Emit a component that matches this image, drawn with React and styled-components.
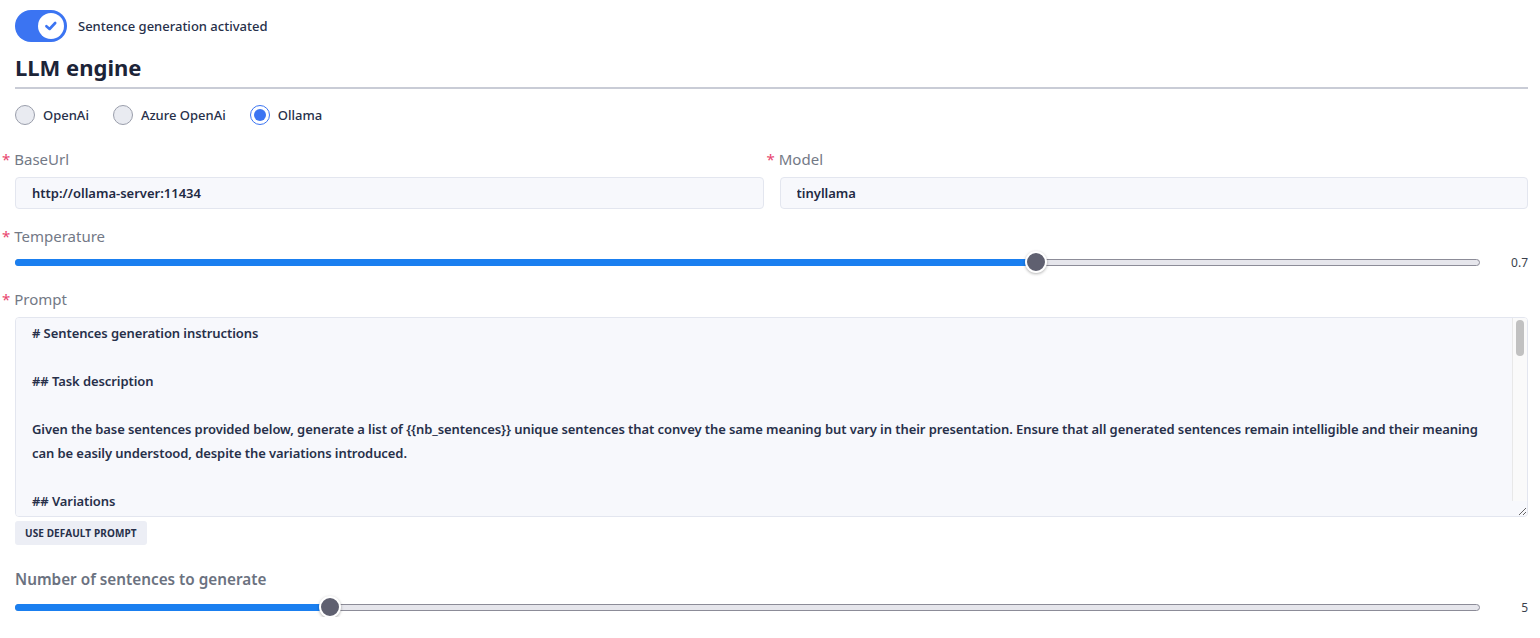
import { useState } from 'react';
import styled, { createGlobalStyle } from 'styled-components';

const GlobalStyle = createGlobalStyle`
  body {
    margin: 0;
    background: #ffffff;
    font-family: 'Noto Sans', 'Open Sans', sans-serif;
    color: #1f2a44;
  }
`;

const PROMPT = `# Sentences generation instructions

## Task description

Given the base sentences provided below, generate a list of {{nb_sentences}} unique sentences that convey the same meaning but vary in their presentation. Ensure that all generated sentences remain intelligible and their meaning can be easily understood, despite the variations introduced.

## Variations

Introduce variations in the sentences by changing the word order, using synonyms, adding or removing punctuation, and altering the sentence structure where appropriate.
{{#languages}}
The sentences should be written in {{languages}}.
{{/languages}}
{{#spelling_mistakes}}
Introduce some spelling mistakes in the generated sentences.
{{/spelling_mistakes}}
{{#sms_language}}
Use SMS language (abbreviations, phonetic spellings) in some of the sentences.
{{/sms_language}}
{{#abbreviated_language}}
Use abbreviated language in some of the sentences.
{{/abbreviated_language}}

## Base sentences

{{#sentences}}
- {{.}}
{{/sentences}}

## Expected output

Return the generated sentences as a JSON array of strings, without any other text.

## Constraints

- Do not repeat any of the base sentences.
- Do not number the sentences.
- Keep each sentence short and natural.
- Keep the original intent of the sentence.
- Avoid introducing new information.
`;

export default function App() {
  const [engine, setEngine] = useState('ollama');
  const [active, setActive] = useState(true);

  return (
    <>
      <GlobalStyle />
      <Page>
        <SwitchRow>
          <SwitchTrack $on={active} onClick={() => setActive(!active)}>
            <SwitchKnob>
              <svg width="16" height="16" viewBox="0 0 16 16">
                <path
                  d="M3.4 8.2 L6.6 11 L12.2 5"
                  fill="none"
                  stroke="#3b74f2"
                  strokeWidth="2.6"
                  strokeLinecap="round"
                  strokeLinejoin="round"
                />
              </svg>
            </SwitchKnob>
          </SwitchTrack>
          <SwitchLabel>Sentence generation activated</SwitchLabel>
        </SwitchRow>

        <Heading>LLM engine</Heading>

        <RadioRow>
          {[
            ['openai', 'OpenAi'],
            ['azure', 'Azure OpenAi'],
            ['ollama', 'Ollama'],
          ].map(([key, label]) => (
            <RadioOption key={key} onClick={() => setEngine(key)}>
              <RadioCircle $checked={engine === key} />
              {label}
            </RadioOption>
          ))}
        </RadioRow>

        <FieldGrid>
          <Field>
            <Label>
              <Required>*</Required>BaseUrl
            </Label>
            <Input defaultValue="http://ollama-server:11434" />
          </Field>
          <Field>
            <Label>
              <Required>*</Required>Model
            </Label>
            <Input defaultValue="tinyllama" />
          </Field>
        </FieldGrid>

        <Label $top={17}>
          <Required>*</Required>Temperature
        </Label>
        <Slider value={0.7} min={0} max={1} top={6} />

        <Label $top={17}>
          <Required>*</Required>Prompt
        </Label>
        <PromptBox>
          <PromptArea defaultValue={PROMPT} spellCheck={false} />
          {/* the headless browser hides native scrollbars, so draw the rail */}
          <ScrollRail>
            <ScrollThumb />
          </ScrollRail>
        </PromptBox>
        <SmallButton>Use default prompt</SmallButton>

        <SectionLabel>Number of sentences to generate</SectionLabel>
        <Slider value={5} min={1} max={20} top={8} />
      </Page>
    </>
  );
}

// thumb stays inside the track: its centre runs from 10px to (width - 10px)
function Slider({ value, min, max, top }) {
  const ratio = (value - min) / (max - min);
  const pos = `calc((100% - 20px) * ${ratio} + 10px)`;
  return (
    <SliderRow $top={top}>
      <SliderTrack>
        <SliderFill style={{ width: pos }} />
        <SliderThumb style={{ left: pos }} />
      </SliderTrack>
      <SliderValue>{value}</SliderValue>
    </SliderRow>
  );
}

const Page = styled.div`
  padding: 10px 12px 0 15px;
  display: flex;
  flex-direction: column;
`;

const SwitchRow = styled.div`
  display: flex;
  align-items: center;
  gap: 11px;
  height: 32px;
`;

const SwitchTrack = styled.div`
  width: 52px;
  height: 32px;
  border-radius: 16px;
  background: ${(p) => (p.$on ? '#3b74f2' : '#cbd0db')};
  display: flex;
  align-items: center;
  justify-content: flex-end;
  padding-right: 3px;
  box-sizing: border-box;
  cursor: pointer;
`;

const SwitchKnob = styled.div`
  width: 26px;
  height: 26px;
  border-radius: 50%;
  background: #ffffff;
  display: flex;
  align-items: center;
  justify-content: center;
`;

const SwitchLabel = styled.span`
  font-size: 13px;
  font-weight: 500;
  color: #27304a;
`;

const Heading = styled.h2`
  margin: 11px 0 0;
  font-size: 22px;
  line-height: 28px;
  font-weight: 700;
  color: #1c2438;
  padding-bottom: 6px;
  border-bottom: 2px solid #c9ccd6;
`;

const RadioRow = styled.div`
  display: flex;
  gap: 24px;
  margin-top: 16px;
  height: 20px;
`;

const RadioOption = styled.label`
  display: flex;
  align-items: center;
  gap: 8px;
  font-size: 13px;
  font-weight: 500;
  color: #27304a;
  cursor: pointer;
`;

const RadioCircle = styled.span`
  width: 20px;
  height: 20px;
  box-sizing: border-box;
  border-radius: 50%;
  border: 1px solid ${(p) => (p.$checked ? '#3b74f2' : '#9a9eab')};
  background: ${(p) => (p.$checked ? '#ffffff' : '#e9ebf1')};
  display: flex;
  align-items: center;
  justify-content: center;

  &::after {
    content: '';
    display: ${(p) => (p.$checked ? 'block' : 'none')};
    width: 12px;
    height: 12px;
    border-radius: 50%;
    background: #3b74f2;
  }
`;

const FieldGrid = styled.div`
  display: grid;
  grid-template-columns: 1fr 1fr;
  gap: 16px;
  margin-top: 24px;
`;

const Field = styled.div`
  display: flex;
  flex-direction: column;
`;

const Label = styled.label`
  display: block;
  margin: ${(p) => p.$top || 0}px 0 0 -13px;
  font-size: 15px;
  line-height: 20px;
  font-weight: 400;
  color: #737986;
`;

const Required = styled.span`
  color: #e8456f;
  margin-right: 4px;
`;

const Input = styled.input`
  margin-top: 8px;
  height: 32px;
  box-sizing: border-box;
  border: 1px solid #e3e6ef;
  border-radius: 4px;
  background: #f7f8fc;
  padding: 0 16px;
  font-family: inherit;
  font-size: 13px;
  font-weight: 600;
  color: #1f2a44;
  outline: none;
`;

const SliderRow = styled.div`
  display: flex;
  align-items: center;
  height: 20px;
  margin-top: ${(p) => p.$top}px;
`;

const SliderTrack = styled.div`
  position: relative;
  flex: 1;
  height: 7px;
  box-sizing: border-box;
  border: 1px solid #8c8c98;
  border-radius: 4px;
  background: #e6e6ec;
`;

const SliderFill = styled.div`
  position: absolute;
  left: -1px;
  top: -1px;
  bottom: -1px;
  background: #1a7ff0;
  border-radius: 4px 0 0 4px;
`;

const SliderThumb = styled.div`
  position: absolute;
  top: 50%;
  width: 22px;
  height: 22px;
  box-sizing: border-box;
  border-radius: 50%;
  background: #5f6070;
  border: 2px solid #ffffff;
  box-shadow: 0 1px 3px rgba(0, 0, 0, 0.3);
  transform: translate(-50%, -50%);
`;

const SliderValue = styled.span`
  width: 48px;
  text-align: right;
  font-size: 12px;
  color: #3a3f4c;
`;

const PromptBox = styled.div`
  position: relative;
  margin-top: 8px;
  display: flex;
  flex-direction: column;
`;

const PromptArea = styled.textarea`
  height: 200px;
  box-sizing: border-box;
  border: 1px solid #e3e6ef;
  border-radius: 4px;
  background: #f7f8fc;
  padding: 3px 31px 0 16px;
  font-family: inherit;
  font-size: 13px;
  line-height: 24px;
  font-weight: 600;
  letter-spacing: -0.08px;
  color: #27304a;
  outline: none;
  resize: vertical;
`;

const ScrollRail = styled.div`
  position: absolute;
  top: 1px;
  right: 1px;
  bottom: 16px;
  width: 15px;
  box-sizing: border-box;
  background: #fafafa;
  border-left: 1px solid #e8e8e8;
  border-top-right-radius: 3px;
  pointer-events: none;
`;

const ScrollThumb = styled.div`
  margin: 2px 0 0 3px;
  width: 8px;
  height: 36px;
  border-radius: 4px;
  background: #c1c1c1;
`;

const SmallButton = styled.button`
  align-self: flex-start;
  margin-top: 4px;
  height: 24px;
  padding: 0 10px;
  border: none;
  border-radius: 3px;
  background: #eceef5;
  font-family: inherit;
  font-size: 10px;
  font-weight: 700;
  letter-spacing: 0.1px;
  text-transform: uppercase;
  color: #27304a;
  cursor: pointer;
`;

const SectionLabel = styled.div`
  margin-top: 24px;
  font-size: 15.3px;
  line-height: 20px;
  font-weight: 600;
  color: #6b7280;
`;
